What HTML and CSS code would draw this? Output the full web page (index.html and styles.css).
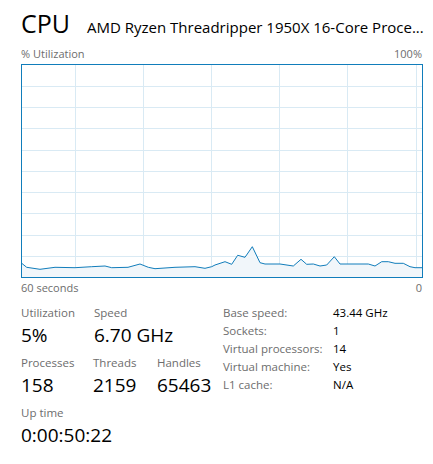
FILE: index.html
```html
<!DOCTYPE html>
<html lang="en">
<head>
    <meta charset="UTF-8">
    <title>CPU</title>
    <link rel="stylesheet" href="styles.css">
</head>
<body>
    <div class="header">
        <div class="title">CPU</div>
        <div class="model" title="AMD Ryzen Threadripper 1950X 16-Core Processor">AMD Ryzen Threadripper 1950X 16-Core Proce...</div>
    </div>

    <div class="axis top">
        <span>% Utilization</span>
        <span>100%</span>
    </div>
    <div class="chart">
        <svg width="400" height="212" viewBox="0 0 400 212">
            <g class="grid">
                <line x1="53.5" y1="0" x2="53.5" y2="212"/>
                <line x1="121.5" y1="0" x2="121.5" y2="212"/>
                <line x1="189.5" y1="0" x2="189.5" y2="212"/>
                <line x1="257.5" y1="0" x2="257.5" y2="212"/>
                <line x1="325.5" y1="0" x2="325.5" y2="212"/>
                <line x1="394.5" y1="0" x2="394.5" y2="212"/>
                <line x1="0" y1="21.5" x2="400" y2="21.5"/>
                <line x1="0" y1="42.5" x2="400" y2="42.5"/>
                <line x1="0" y1="63.5" x2="400" y2="63.5"/>
                <line x1="0" y1="85.5" x2="400" y2="85.5"/>
                <line x1="0" y1="106.5" x2="400" y2="106.5"/>
                <line x1="0" y1="127.5" x2="400" y2="127.5"/>
                <line x1="0" y1="148.5" x2="400" y2="148.5"/>
                <line x1="0" y1="170.5" x2="400" y2="170.5"/>
                <line x1="0" y1="191.5" x2="400" y2="191.5"/>
            </g>
            <path id="usage" class="area" d=""/>
            <path id="usageLine" class="line" d=""/>
        </svg>
    </div>
    <div class="axis bottom">
        <span>60 seconds</span>
        <span>0</span>
    </div>

    <div class="details">
        <div class="live">
            <div class="row">
                <div class="stat w73">
                    <div class="label">Utilization</div>
                    <div class="value">5%</div>
                </div>
                <div class="stat">
                    <div class="label">Speed</div>
                    <div class="value">6.70 GHz</div>
                </div>
            </div>
            <div class="row">
                <div class="stat w72">
                    <div class="label">Processes</div>
                    <div class="value">158</div>
                </div>
                <div class="stat w64">
                    <div class="label">Threads</div>
                    <div class="value">2159</div>
                </div>
                <div class="stat">
                    <div class="label">Handles</div>
                    <div class="value">65463</div>
                </div>
            </div>
            <div class="row">
                <div class="stat">
                    <div class="label">Up time</div>
                    <div class="value">0:00:50:22</div>
                </div>
            </div>
        </div>

        <div class="specs">
            <span class="key">Base speed:</span><span>43.44 GHz</span>
            <span class="key">Sockets:</span><span>1</span>
            <span class="key">Virtual processors:</span><span>14</span>
            <span class="key">Virtual machine:</span><span>Yes</span>
            <span class="key">L1 cache:</span><span>N/A</span>
        </div>
    </div>

    <script>
        // last 60 seconds of samples, in chart pixels (x, y from top)
        const samples = [
            [0,198.5],[4.7,202.3],[18,204.3],[33,202.3],[53,202.7],[69.7,201.7],[83,201],
            [89.7,202.7],[106,202.3],[118,199],[126.3,202.3],[133,203.7],[153,202.3],
            [173,201.7],[183,203.3],[189.7,201.7],[193,200],[203,196.7],[209.7,199.3],
            [215.7,190.3],[223,192.3],[230.3,181.7],[238,197.7],[243,199],[258,199],
            [271.3,201],[279,194.3],[284.7,199.3],[291.3,199],[298,201],[304.7,200],
            [312.3,191.7],[318,199],[346.3,199],[353,201],[359.7,196.7],[366.3,196.7],
            [373,198.3],[381.3,198.3],[388,201.7],[393,202.7],[400,202.7]
        ];
        const pts = samples.map(p => p[0] + "," + p[1]).join(" L");
        document.getElementById("usageLine").setAttribute("d", "M" + pts);
        document.getElementById("usage").setAttribute("d", "M" + pts + " L400,212 L0,212 Z");
    </script>
</body>
</html>
```

FILE: styles.css
```css
body {
    margin: 0;
    padding: 8px 11px 0 21px;
    background: #fff;
    font-family: "Open Sans", "Noto Sans", sans-serif;
    color: #000;
    width: 401px;
}

.header {
    display: flex;
    align-items: baseline;
    height: 38px;
}

.title {
    font-size: 25px;
    line-height: 30px;
    margin-right: 17px;
    flex: none;
}

.model {
    font-size: 15px;
    white-space: nowrap;
}

.axis {
    display: flex;
    justify-content: space-between;
    font-size: 11px;
    color: #6d6d6d;
    line-height: 16px;
}

.axis.top { margin-bottom: 2px; }
.axis.bottom { margin-top: 2px; }

.chart {
    width: 400px;
    height: 212px;
    border: 1px solid #117dbb;
}

.chart svg { display: block; }

.grid line {
    stroke: #d9eaf4;
    stroke-width: 1;
}

.area { fill: #f1f6fa; }

.line {
    fill: none;
    stroke: #117dbb;
    stroke-width: 1;
}

.details {
    display: flex;
    align-items: flex-start;
    margin-top: 8px;
}

.live { width: 202px; }

.row {
    display: flex;
    margin-bottom: 6px;
}

.w73 { width: 73px; }
.w72 { width: 72px; }
.w64 { width: 64px; }

.label {
    font-size: 11.5px;
    color: #6d6d6d;
    line-height: 18px;
}

.value {
    font-size: 19px;
    line-height: 26px;
}

.specs {
    display: grid;
    grid-template-columns: 110px auto;
    align-content: start;
    font-size: 11.5px;
    line-height: 18px;
}

.key { color: #6d6d6d; }
```
